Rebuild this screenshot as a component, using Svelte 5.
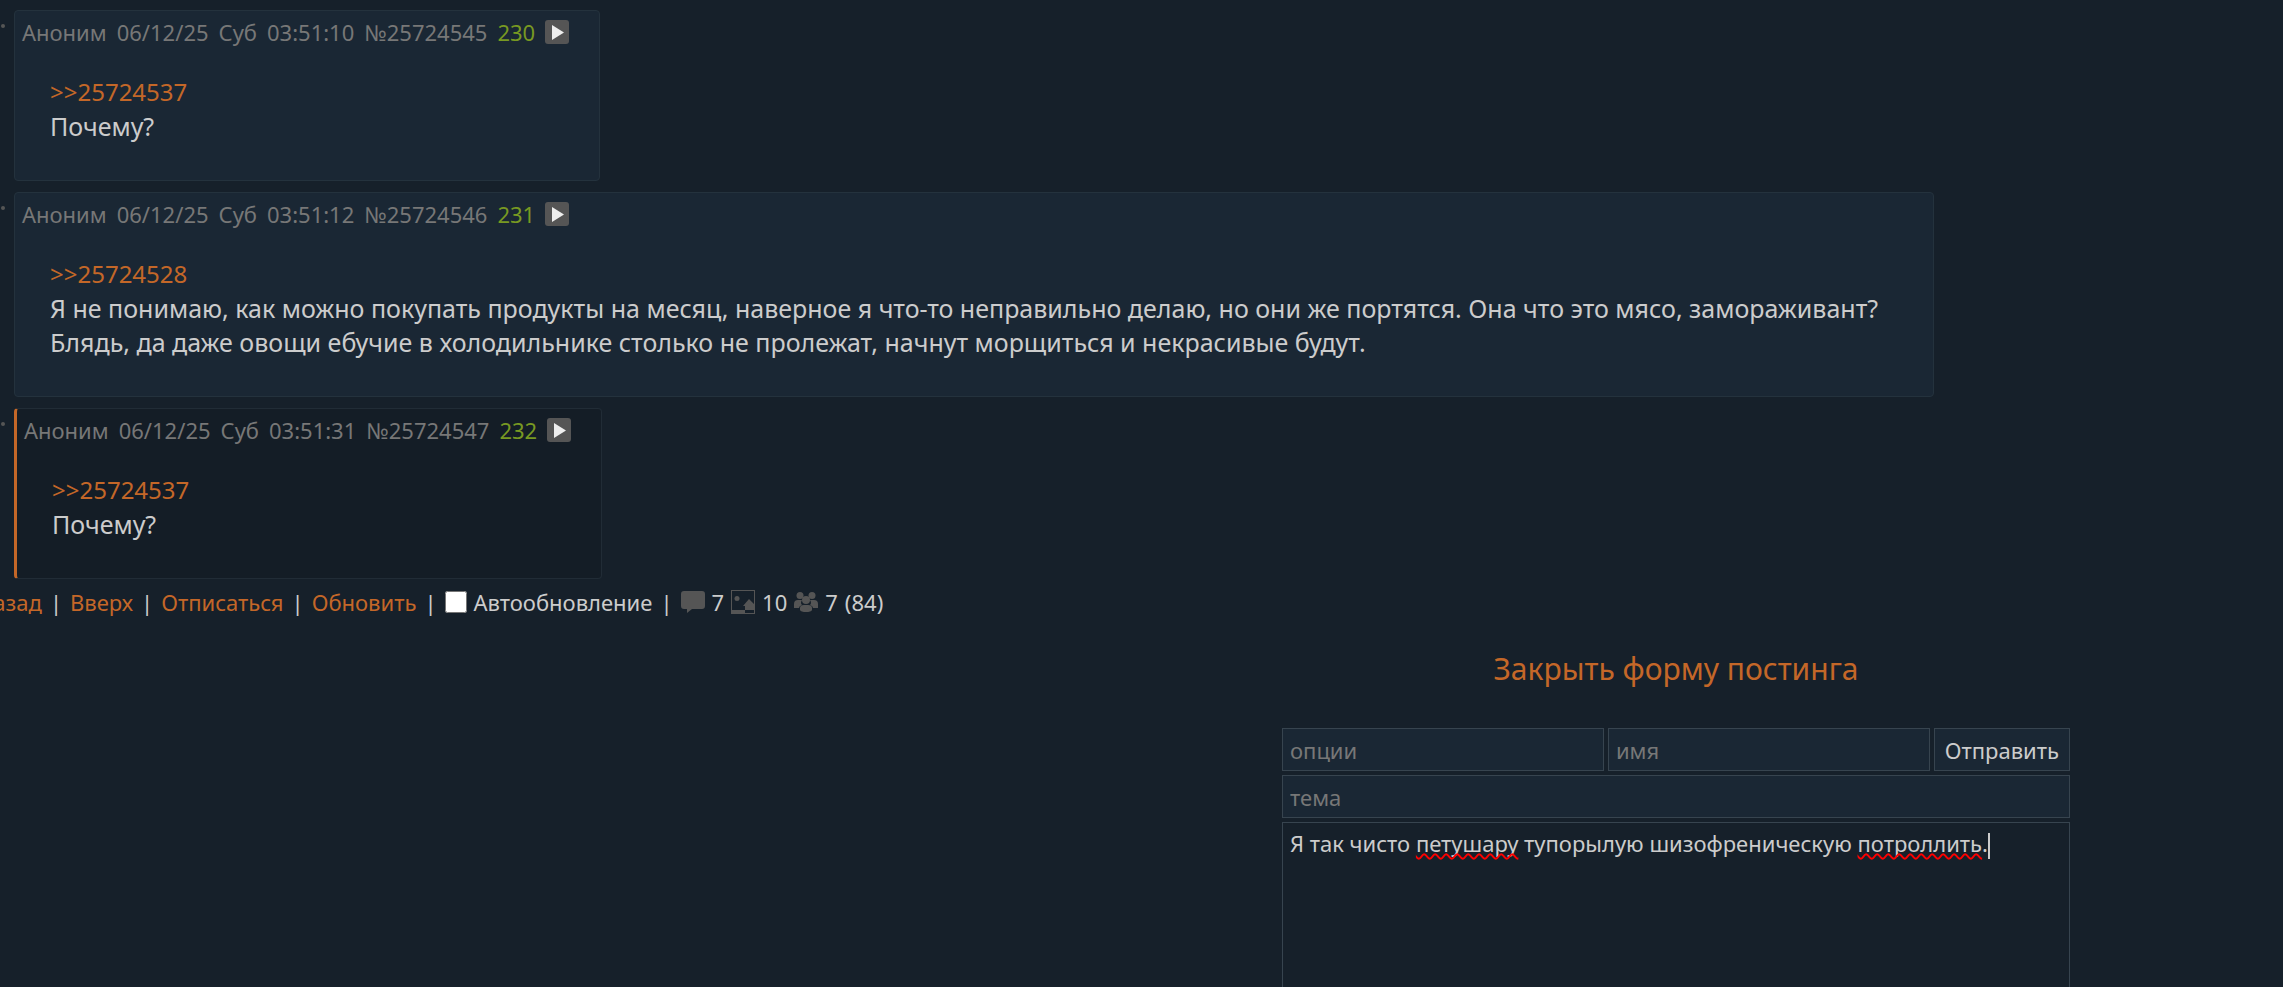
<script>
    let posts = [
        { id: 25724545, time: '03:51:10', index: 230, reply: 25724537, lines: ['Почему?'] },
        {
            id: 25724546,
            time: '03:51:12',
            index: 231,
            reply: 25724528,
            lines: [
                'Я не понимаю, как можно покупать продукты на месяц, наверное я что-то неправильно делаю, но они же портятся. Она что это мясо, замораживант?',
                'Блядь, да даже овощи ебучие в холодильнике столько не пролежат, начнут морщиться и некрасивые будут.'
            ]
        },
        { id: 25724547, time: '03:51:31', index: 232, reply: 25724537, lines: ['Почему?'], own: true }
    ];

    let autoUpdate = $state(false);
    let comment = $state('Я так чисто петушару тупорылую шизофреническую потроллить.');

    const misspelled = ['петушару', 'потроллить'];
    let chunks = $derived(comment.split(new RegExp(`(${misspelled.join('|')})`)));
</script>

<main>
    <div class="thread">
        {#each posts as post}
            <div class="row">
                <svg class="dots" viewBox="0 0 24 8" aria-hidden="true">
                    <circle cx="9" cy="4" r="2" />
                    <circle cx="14" cy="4" r="2" />
                    <circle cx="19" cy="4" r="2" />
                </svg>
                <article class="post" class:own={post.own}>
                    <header>
                        <span>Аноним</span>
                        <span>06/12/25</span>
                        <span>Суб</span>
                        <span>{post.time}</span>
                        <span>№{post.id}</span>
                        <span class="index">{post.index}</span>
                        <button class="play" aria-label="Меню поста">
                            <svg viewBox="0 0 24 24"><path d="M7 5v15l12-7.500z" /></svg>
                        </button>
                    </header>
                    <div class="message">
                        <a href="#{post.reply}">&gt;&gt;{post.reply}</a>
                        {#each post.lines as line}
                            <p>{line}</p>
                        {/each}
                    </div>
                </article>
            </div>
        {/each}
    </div>

    <nav>
        <a href="#back">Назад</a>
        <span>|</span>
        <a href="#top">Вверх</a>
        <span>|</span>
        <a href="#unsubscribe">Отписаться</a>
        <span>|</span>
        <a href="#update">Обновить</a>
        <span>|</span>
        <label><input type="checkbox" bind:checked={autoUpdate} />Автообновление</label>
        <span>|</span>
        <div class="stats">
            <svg viewBox="0 0 24 24"><path d="M3 1h18a3 3 0 0 1 3 3v12a3 3 0 0 1-3 3H11l-5 4v-4H3a3 3 0 0 1-3-3V4a3 3 0 0 1 3-3z" /></svg>
            <span>7</span>
            <svg viewBox="0 0 24 24">
                <path d="M0 0h24v24H0zM1 1v19h13v3h9V1z" fill-rule="evenodd" />
                <circle cx="6" cy="8.500" r="2.500" />
                <path d="M14 20v-4h-2l6-7 5 5v6z" />
            </svg>
            <span>10</span>
            <svg viewBox="0 0 24 24">
                <circle cx="6" cy="5.500" r="3.500" />
                <circle cx="18" cy="5.500" r="3.500" />
                <path d="M0 18v-4q0-4 4-4h4q-2 3 0 5-3 1-3 3zM24 18v-4q0-4-4-4h-4q2 3 0 5 3 1 3 3z" />
                <circle cx="12" cy="10" r="4" />
                <path d="M6 20v-2q0-3 4-3h4q4 0 4 3v2q-1 2-6 2t-6-2z" />
            </svg>
            <span>7</span>
            <span>(84)</span>
        </div>
    </nav>

    <section>
        <a class="toggle" href="#form">Закрыть форму постинга</a>
        <form onsubmit={(e) => e.preventDefault()}>
            <input type="text" placeholder="опции" aria-label="опции" />
            <input type="text" placeholder="имя" aria-label="имя" />
            <button class="send">Отправить</button>
            <input class="wide" type="text" placeholder="тема" aria-label="тема" />
            <div class="wide editor">
                <textarea bind:value={comment} spellcheck="false" aria-label="Комментарий"></textarea>
                <!-- spelling marks and caret over the typed text -->
                <div class="marks" aria-hidden="true">{#each chunks as chunk}<span class:bad={misspelled.includes(chunk)}>{chunk}</span>{/each}<i></i></div>
            </div>
        </form>
    </section>
</main>

<style>
    :global(body) {
        margin: 0;
        background: #16202a;
        overflow: hidden;
    }

    main {
        --text: #cccccc;
        --link: #c46728;
        --border: #37444f;
        --field: #1a2734;
        font-family: "Trebuchet MS", "Noto Sans", sans-serif;
        font-size: 22px;
        line-height: 34px;
        color: var(--text);
        padding-top: 10px;
    }

    a {
        color: var(--link);
        text-decoration: none;
    }

    p {
        margin: 0;
        font-size: 25px;
    }

    button,
    input,
    textarea {
        font: inherit;
        color: inherit;
        box-sizing: border-box;
        margin: 0;
    }

    .thread {
        display: flex;
        flex-direction: column;
        gap: 11px;
    }

    .row {
        display: flex;
        align-items: flex-start;
    }

    .dots {
        flex: none;
        width: 24px;
        height: 8px;
        margin: 12px 6px 0 -16px;
        fill: #555555;
    }

    .post {
        background: #1a2734;
        border: 1px solid #24323d;
        border-radius: 4px;
        padding: 4px 30px 31px 7px;
    }

    .own {
        background: #141d26;
        border-color: #212c36;
        border-left: 3px solid var(--link);
    }

    header {
        display: flex;
        align-items: center;
        gap: 10px;
        color: #777777;
    }

    .index {
        color: #789922;
    }

    .play {
        width: 24px;
        height: 24px;
        padding: 0;
        border: none;
        border-radius: 3px;
        background: #555555;
    }

    .play svg {
        display: block;
        fill: #eeeeee;
    }

    .message {
        font-size: 24px;
        padding: 26px 25px 6px 28px;
    }

    nav {
        display: flex;
        align-items: center;
        gap: 8px;
        margin: 6px 0 0 -23px;
    }

    label {
        display: flex;
        align-items: center;
        gap: 7px;
    }

    input[type="checkbox"] {
        width: 22px;
        height: 22px;
    }

    .stats {
        display: flex;
        align-items: center;
        gap: 7px;
    }

    .stats svg {
        width: 24px;
        height: 24px;
        fill: #555555;
    }

    section {
        display: flex;
        flex-direction: column;
        width: min(788px, 100%);
        margin: 28px 213px 0 auto;
        gap: 37px;
    }

    .toggle {
        align-self: center;
        font-size: 30px;
        line-height: 44px;
    }

    form {
        display: grid;
        grid-template-columns: 1fr 1fr auto;
        gap: 4px;
    }

    .wide {
        grid-column: 1 / -1;
    }

    input[type="text"],
    .send {
        min-width: 0;
        height: 43px;
        padding: 0 7px;
        border: 1px solid var(--border);
        background: var(--field);
    }

    .send {
        padding: 0 10px;
    }

    ::placeholder {
        color: #777777;
        opacity: 1;
    }

    .editor {
        position: relative;
    }

    textarea,
    .marks {
        padding: 3px 7px;
        border: 1px solid var(--border);
        line-height: 34px;
    }

    textarea {
        display: block;
        width: 100%;
        height: 320px;
        background: none;
        resize: none;
        outline: none;
    }

    .marks {
        position: absolute;
        inset: 0;
        color: transparent;
        border-color: transparent;
        white-space: pre-wrap;
        pointer-events: none;
    }

    .bad {
        text-decoration: underline wavy #ff0000 2px;
        text-decoration-skip-ink: none;
    }

    i {
        display: inline-block;
        width: 2px;
        height: 26px;
        vertical-align: middle;
        background: var(--text);
    }
</style>
